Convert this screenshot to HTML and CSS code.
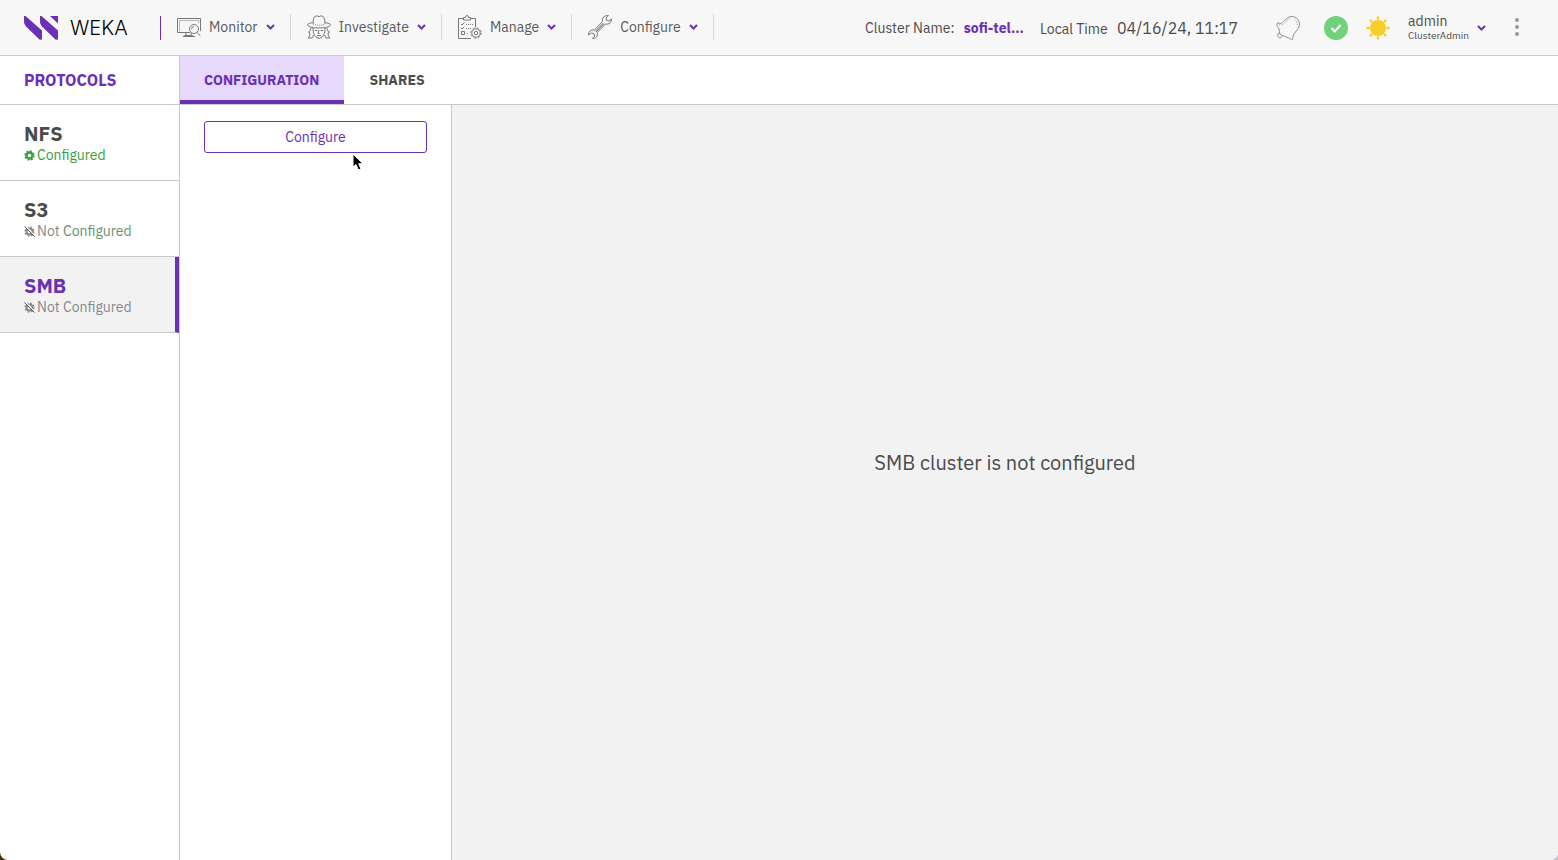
FILE: index.html
```html
<!DOCTYPE html>
<html lang="en">
<head>
<meta charset="utf-8">
<title>WEKA - Protocols</title>
<link rel="stylesheet" href="styles.css">
</head>
<body>
<svg class="defs" aria-hidden="true">
  <symbol id="chevron" viewBox="0 0 9 6"><path d="M1 1l3.500 3.500L8 1" fill="none" stroke="currentColor" stroke-width="2"/></symbol>
  <symbol id="gear-off" viewBox="0 0 11 11">
    <circle cx="5.500" cy="5.500" r="3" fill="none" stroke="currentColor" stroke-width="2"/>
    <circle cx="5.500" cy="5.500" r="4.500" fill="none" stroke="currentColor" stroke-width="1.300" stroke-dasharray="1.800 1.730"/>
    <path d="M1.500 0l9 10" stroke="#fff" stroke-width="1.200"/><path d="M.5.5l10 10" stroke="#4b4b4b"/>
  </symbol>
</svg>
<div class="app">
  <header class="topbar">
    <a class="brand" href="#">
      <svg class="mark" viewBox="0 0 34 24" aria-hidden="true">
        <g fill="#6a30b5"><path d="M0 0h1.500L18 14.500V22.500q-.5 2-2.500 1L2 10.500Q0 8.500 0 6z"/><path d="M16 0h1.500L34 14.500V22.500q-.5 2-2.500 1L18 10.500Q16 8.500 16 6z"/><path d="M26 0h8v7.500z"/></g>
      </svg>
      <span class="wordmark">WEKA</span>
    </a>
    <nav class="menu">
      <button class="menu-item" type="button">
        <svg class="menu-icon" viewBox="0 0 24 24" aria-hidden="true"><path d="M13 17.500H.5V3.500h23V16M9 18v2.500M14 18v2.500M6 21.500h12M6 21.500l2-1h7l2 1"/><path d="M2.500 15.500v-10h19v3" stroke-dasharray="1 1"/><circle cx="17" cy="14" r="4.500"/><path d="M14.500 14q.3-2.500 2.500-2.500M20.300 17.500l3 3.500"/></svg>
        <span>Monitor</span><svg class="chevron" aria-hidden="true"><use href="#chevron"/></svg>
      </button>
      <button class="menu-item" type="button">
        <svg class="menu-icon" viewBox="0 0 24 24" aria-hidden="true"><path d="M6 9q0-7.500 3-8 1.500-.5 3 .7 1.500-1.200 3-.7 3 .5 3 8M5.500 7.500Q0 8.500.5 10c.5 4 22.500 4 23 0q.5-1.500-5-2.500"/><path d="M6 9q6 2.500 12 0" stroke-dasharray="1 1"/><path d="M6 13q0 7 3 9l3 1.500 3-1.500q3-2 3-9M4 13q0 3-2.500 4l1.500 1q0 4-2 5h4l1.500-3M20 13q0 3 2.500 4L21 18q0 4 2 5h-4l-1.500-3M8 15.500h2.500M13.500 15.500H16M12 15l-1 3.500h1.500M10 20.500h4"/></svg>
        <span>Investigate</span><svg class="chevron" aria-hidden="true"><use href="#chevron"/></svg>
      </button>
      <button class="menu-item" type="button">
        <svg class="menu-icon" viewBox="0 0 24 24" aria-hidden="true"><path d="M5 3.500H.5v20H13M13 3.500h4.500V12M5.500 5V2.500h2q0-2 1.500-2t1.500 2h2V5zM3 9l1 1 2.500-2.500M3 13l1 1 2.500-2.500M3.500 16.500h3v3h-3z"/><path d="M8 9.500h7M8 13.500h5M9 18.500h2" stroke-dasharray="1 1"/><circle cx="18" cy="18" r="1.700"/><circle cx="18" cy="18" r="4.200"/><circle cx="18" cy="18" r="5.200" stroke-dasharray="2 2.080"/></svg>
        <span>Manage</span><svg class="chevron" aria-hidden="true"><use href="#chevron"/></svg>
      </button>
      <button class="menu-item" type="button">
        <svg class="menu-icon" viewBox="0 0 24 24" aria-hidden="true"><path d="M20.500.7q-3-.7-5 1.300-1.700 2-1 4.500L6.500 15Q4 14.300 2 16 .2 18 .5 20L3.500 18l2.500.7.7 2.300L4.500 23.500q2.500.2 4-1.500 1.500-2 .8-4.500L17.500 9Q20 9.700 22 8q1.700-2 1.500-4L21 6l-2.500-.7L18 3z"/><path d="M8 17l8-8.300M7.300 16.300l8-8.300"/></svg>
        <span>Configure</span><svg class="chevron" aria-hidden="true"><use href="#chevron"/></svg>
      </button>
    </nav>
    <div class="status">
      <span class="cluster">Cluster Name: <a class="cluster-name" href="#">sofi-tel...</a></span>
      <span class="clock">Local Time <time class="time" datetime="2024-04-16T11:17">04/16/24, 11:17</time></span>
      <button class="icon-button bell" type="button" aria-label="Alerts">
        <svg viewBox="0 0 24 24" fill="none" stroke="#909093" aria-hidden="true"><path d="M1 7.500C.2 9.500 2 11 3 13c.8 2 .2 4 1 5.500 2.500 1 7.500 2.500 11.500 5 1.500.5 1.200-1 1.500-3 .5-4 6-7 6.500-11 .5-5-3.500-9.500-8.500-9C10 1 7 7.500 4.500 7.500Q1.500 6.500 1 7.500z"/><path d="M4 16.500c-4 1-2.500 7 1 5l1.500-1.500"/><path d="M3 9c5 1 7-5 11-6.500M19 3.500q3 3 2 7" stroke-dasharray="1 1.500"/></svg>
      </button>
      <button class="icon-button" type="button" aria-label="Cluster healthy">
        <svg viewBox="0 0 24 24" aria-hidden="true"><circle cx="12" cy="12" r="12" fill="#71d07a"/><path d="M7.500 12l3.200 3.500 6-6.500" fill="none" stroke="#fff" stroke-width="2"/></svg>
      </button>
      <button class="icon-button theme" type="button" aria-label="Light theme">
        <svg viewBox="0 0 24 24" aria-hidden="true"><circle cx="12" cy="12" r="8" fill="#f6cf27"/><path d="M12 1.500v1M12 21.500v1M1.500 12h1M21.500 12h1M4.600 4.600l.7.700M18.700 18.700l.7.700M4.600 19.400l.7-.7M18.700 5.300l.7-.7" stroke="#f6cf27" stroke-width="2.600" stroke-linecap="round"/></svg>
      </button>
      <button class="user" type="button">
        <span class="user-text"><span class="user-name">admin</span><span class="user-role">ClusterAdmin</span></span>
        <svg class="chevron" aria-hidden="true"><use href="#chevron"/></svg>
      </button>
      <button class="icon-button more" type="button" aria-label="More">
        <svg viewBox="0 0 24 24" fill="#999" aria-hidden="true"><circle cx="12" cy="4" r="2"/><circle cx="12" cy="11" r="2"/><circle cx="12" cy="18" r="2"/></svg>
      </button>
    </div>
  </header>
  <div class="body">
    <aside class="sidebar">
      <h1 class="side-title">PROTOCOLS</h1>
      <a class="protocol" href="#"><strong>NFS</strong><span class="state ok">
        <svg class="gear" viewBox="0 0 11 11" aria-hidden="true"><circle cx="5.500" cy="5.500" r="3" fill="none" stroke="currentColor" stroke-width="2.400"/><circle cx="5.500" cy="5.500" r="4.500" fill="none" stroke="currentColor" stroke-width="1.400" stroke-dasharray="1.800 1.730"/></svg>Configured</span></a>
      <a class="protocol" href="#"><strong>S3</strong><span class="state"><svg class="gear" aria-hidden="true"><use href="#gear-off"/></svg>Not <span class="fading">Configured</span></span></a>
      <a class="protocol active" href="#"><strong>SMB</strong><span class="state"><svg class="gear" aria-hidden="true"><use href="#gear-off"/></svg>Not Configured</span></a>
    </aside>
    <main class="main">
      <nav class="tabs"><a class="tab active" href="#">CONFIGURATION</a><a class="tab" href="#">SHARES</a></nav>
      <div class="content">
        <section class="panel">
          <button class="configure" type="button">Configure</button>
          <svg class="pointer" viewBox="0 0 12 18" aria-hidden="true"><path d="M1 1v13l3-2.500 2.500 5.500 2.500-1-2.300-5.300H11z" fill="#000" stroke="#fff"/></svg>
        </section>
        <section class="empty"><p>SMB cluster is not configured</p></section>
      </div>
    </main>
  </div>
</div>
</body>
</html>
```
FILE: styles.css
```css
* { box-sizing: border-box; }
html { background: linear-gradient(to right, #3a3210 50%, #c4c4ca 50%); }
body {
  margin: 0;
  font-family: "IBM Plex Sans", Roboto, "Noto Sans", sans-serif;
  font-size: 14px;
  color: #4b4b4b;
}
button {
  padding: 0;
  border: 0;
  background: none;
  font: inherit;
  color: inherit;
  cursor: pointer;
}
a { color: inherit; text-decoration: none; }
.defs { position: absolute; width: 0; height: 0; }
.app {
  display: flex;
  flex-direction: column;
  min-height: 100vh;
  border-radius: 0 0 8px 8px;
  overflow: hidden;
  background: #fefefe;
}
.topbar {
  display: flex;
  align-items: center;
  height: 56px;
  padding-left: 24px;
  border-bottom: 1px solid #c9c9cc;
  background: #f7f7f7;
}
.brand {
  display: flex;
  align-items: center;
  gap: 12px;
  width: 137px;
  height: 24px;
  border-right: 1px solid #6a30b5;
}
.mark { width: 34px; height: 24px; }
.wordmark { font: 300 20px/24px Inter, sans-serif; color: #000; }
.menu { display: flex; }
.menu-item {
  display: flex;
  align-items: center;
  gap: 8px;
  height: 26px;
  margin-bottom: 2px;
  padding: 0 15px 0 16px;
  border-right: 1px solid #d8d8db;
  color: #5a5a5c;
  font-size: 14px;
}
.menu-icon { width: 24px; height: 24px; fill: none; stroke: #77777a; }
.chevron { width: 9px; height: 6px; color: #6a30b5; }
.status { display: flex; align-items: center; margin-left: auto; }
.cluster-name { margin-left: 6px; color: #6a30b5; font-weight: 700; }
.clock { margin-left: 16px; }
.time { margin-left: 6px; font-size: 16px; }
.icon-button { width: 24px; height: 24px; }
.icon-button svg { display: block; width: 24px; height: 24px; }
.bell { margin: 0 24px 0 38px; }
.theme { margin: 0 18px 0 18px; }
.user { display: flex; align-items: center; gap: 8px; text-align: left; }
.user-text { display: flex; flex-direction: column; padding-bottom: 2px; }
.user-name { line-height: 18px; }
.user-role { font-size: 10px; line-height: 12px; }
.more { margin: 0 29px 0 19px; }
.body { display: flex; flex: 1; }
.sidebar { width: 180px; border-right: 1px solid #c9c9cc; }
.side-title {
  height: 49px;
  margin: 0;
  padding-left: 24px;
  border-bottom: 1px solid #c9c9cc;
  color: #6a30b5;
  font-size: 16px;
  line-height: 48px;
}
.protocol {
  display: flex;
  flex-direction: column;
  height: 76px;
  padding: 16px 0 0 24px;
  border-bottom: 1px solid #c9c9cc;
}
.protocol strong { font-size: 20px; line-height: 26px; }
.protocol.active { border-right: 4px solid #6a30b5; background: #f2f2f3; }
.protocol.active strong { color: #6a30b5; }
.state { color: #88888a; line-height: 16px; }
.state.ok { color: #36a03e; }
.fading { color: #6c8f6e; }
.gear { width: 11px; height: 11px; margin-right: 2px; vertical-align: -1px; }
.main { display: flex; flex: 1; flex-direction: column; }
.tabs { display: flex; height: 49px; border-bottom: 1px solid #c9c9cc; }
.tab { padding: 0 26px; line-height: 48px; font-weight: 700; }
.tab.active {
  padding: 0 24px;
  border-bottom: 4px solid #6a30b5;
  background: #e6d9fb;
  color: #6a30b5;
}
.content { display: flex; flex: 1; }
.panel {
  position: relative;
  width: 272px;
  padding: 16px 24px;
  border-right: 1px solid #c9c9cc;
}
.configure {
  width: 100%;
  height: 32px;
  border: 1px solid #6a30b5;
  border-radius: 3px;
  color: #6a30b5;
}
.pointer { position: absolute; top: 48px; left: 172px; width: 12px; height: 18px; }
.empty {
  display: flex;
  flex: 1;
  align-items: center;
  justify-content: center;
  padding-bottom: 40px;
  background: #f2f2f3;
  font-size: 20px;
}
.empty p { margin: 0; }
```
